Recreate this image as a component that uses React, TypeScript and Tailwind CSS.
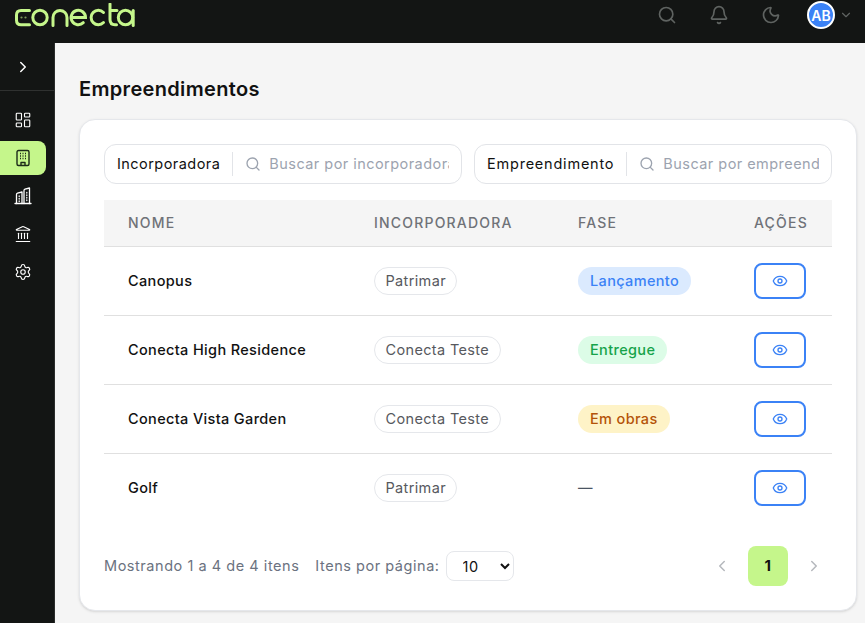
import { Bell, ChevronDown, ChevronLeft, ChevronRight, Eye, LayoutDashboard, Landmark, Moon, Search, Settings } from "lucide-react";

const rows = [
  { nome: "Canopus", inc: "Patrimar", fase: "Lançamento", cls: "bg-[#dbeafe] text-[#3b82f6]" },
  { nome: "Conecta High Residence", inc: "Conecta Teste", fase: "Entregue", cls: "bg-[#dcfce7] text-[#16a34a]" },
  { nome: "Conecta Vista Garden", inc: "Conecta Teste", fase: "Em obras", cls: "bg-[#fef3c7] text-[#b45309]" },
  { nome: "Golf", inc: "Patrimar", fase: "", cls: "" },
];

function Logo() {
  return (
    <svg width="120" height="24" viewBox="0 0 120 24" fill="none" stroke="#c5f68b" strokeWidth="3" strokeLinecap="round">
      <path d="M14.5 7.5H6Q1.5 7.5 1.5 12V17.2Q1.5 21.7 6 21.7H14.5" />
      <circle cx="6.5" cy="14.5" r="1.1" fill="#7d9a5a" stroke="none" />
      <circle cx="10.5" cy="14.5" r="1.1" fill="#7d9a5a" stroke="none" />
      <circle cx="25" cy="14.5" r="7.2" />
      <path d="M38 22.5V14.5a7 7 0 0 1 14 0V22.5" />
      <path d="M56.5 14.5H70.5a7.2 7.2 0 1 0 -2.2 5.2" />
      <path d="M88.5 9.5a7.2 7.2 0 1 0 0 10" />
      <path d="M95 1V16.5q0 5.2 5 5.2h1.5M95 7.5H102" />
      <circle cx="110.5" cy="14.5" r="7.2" />
      <path d="M118.2 7.5V22.5" />
    </svg>
  );
}

function OfficeIcon() {
  return (
    <svg width="18" height="18" viewBox="0 0 18 18" fill="none" stroke="currentColor" strokeWidth="1.4" strokeLinejoin="round">
      <rect x="3" y="1.5" width="12" height="15" rx="1.5" />
      <path d="M7 16.5V13.5H11V16.5" />
      <path d="M6 4.5H7M8.5 4.5H9.5M11 4.5H12M6 7H7M8.5 7H9.5M11 7H12M6 9.5H7M8.5 9.5H9.5M11 9.5H12" />
    </svg>
  );
}

function TowersIcon() {
  return (
    <svg width="18" height="18" viewBox="0 0 18 18" fill="none" stroke="currentColor" strokeWidth="1.3" strokeLinecap="round" strokeLinejoin="round">
      <path d="M1 16.5H17" />
      <path d="M2.5 16.5V7.5Q2.5 6.5 3.5 6.2L8 5V16.5" />
      <path d="M10 16.5V3.5Q10 2.5 11 2.2L15.5 1V16.5" />
      <path d="M5.2 9V9.5M5.2 11.5V12M5.2 14V14.5M12.8 5.5V6M12.8 8V8.5M12.8 10.5V11M12.8 13V13.5" />
    </svg>
  );
}

function Filter({ label, placeholder, labelClass }: { label: string; placeholder: string; labelClass: string }) {
  return (
    <div className="flex-1 min-w-0 h-10 flex items-center bg-white border border-[#e2e4e8] rounded-xl px-3">
      <span className={"text-[14.5px] text-[#111] pr-3 border-r border-[#e2e4e8] leading-6 whitespace-nowrap " + labelClass}>{label}</span>
      <Search size={16} className="ml-3 mr-2 shrink-0 text-[#9ca3af]" />
      <input placeholder={placeholder} className="min-w-0 flex-1 text-[14.5px] tracking-[0.45px] text-[#111] outline-none placeholder:text-[#9ca3af]" />
    </div>
  );
}

export default function App() {
  return (
    <div className="h-screen flex flex-col overflow-hidden bg-[#f5f5f5] font-['Inter',sans-serif]">
      <header className="h-[43px] shrink-0 bg-[#131514] flex items-start pl-[15px] pr-[12px]">
        <div className="pt-[3px]"><Logo /></div>
        <div className="ml-auto h-[30px] flex items-center text-[#5f6361]">
          <Search size={20} />
          <Bell size={20} className="ml-8" />
          <Moon size={20} className="ml-8" />
          <div className="ml-[26px] w-7 h-7 rounded-full bg-[#3b82f6] border-2 border-white flex items-center justify-center text-white text-[14px] font-semibold">AB</div>
          <ChevronDown size={14} className="ml-[4px]" />
        </div>
      </header>

      <div className="flex-1 flex min-h-0">
        <aside className="w-[55px] shrink-0 bg-[#131514] text-white border-r border-[#2a2c2b]">
          <div className="h-[48px] flex items-center justify-center border-b border-[#2f3130] pr-[9px]">
            <ChevronRight size={18} />
          </div>
          <nav className="pt-[12px] flex flex-col gap-[4px] pr-[8px]">
            <div className="h-[34px] flex items-center justify-center"><LayoutDashboard size={18} strokeWidth={1.5} /></div>
            <div className="h-[34px] flex items-center justify-center bg-[#c5f68b] rounded-r-lg text-[#1d2b1a]"><OfficeIcon /></div>
            <div className="h-[34px] flex items-center justify-center"><TowersIcon /></div>
            <div className="h-[34px] flex items-center justify-center"><Landmark size={18} strokeWidth={1.5} /></div>
            <div className="h-[34px] flex items-center justify-center"><Settings size={18} strokeWidth={1.5} /></div>
          </nav>
        </aside>

        <main className="flex-1 min-w-0 pl-6 pr-2 pt-[32px]">
          <h1 className="text-[20px] leading-7 font-semibold tracking-[0.33px] text-[#111] mb-4">Empreendimentos</h1>
          <section className="bg-white border border-[#e5e7eb] rounded-2xl shadow-sm p-6">
            <div className="flex gap-3 mb-4">
              <Filter label="Incorporadora" placeholder="Buscar por incorporadora" labelClass="tracking-[0.45px]" />
              <Filter label="Empreendimento" placeholder="Buscar por empreendimento" labelClass="tracking-[0.78px]" />
            </div>

            <table className="w-full table-fixed border-collapse">
              <colgroup>
                <col className="w-[246px]" />
                <col className="w-[204px]" />
                <col className="w-[176px]" />
                <col className="w-[102px]" />
              </colgroup>
              <thead>
                <tr className="h-[46px] bg-[#f5f5f5] border-b border-[#e0e0e0] text-left text-[14px] text-[#6f7278] tracking-[1.2px]">
                  <th className="pl-6 font-medium">NOME</th>
                  <th className="pl-6 font-medium">INCORPORADORA</th>
                  <th className="pl-6 font-medium">FASE</th>
                  <th className="pl-6 font-medium">AÇÕES</th>
                </tr>
              </thead>
              <tbody className="text-[14.5px] tracking-[0.35px]">
                {rows.map((r, i) => (
                  <tr key={r.nome} className={i < 3 ? "h-[69px] border-b border-[#e0e0e0]" : "h-[69px]"}>
                    <td className="pl-6 font-medium text-[#111] whitespace-nowrap">{r.nome}</td>
                    <td className="pl-6">
                      <span className="inline-flex items-center h-7 px-[10.5px] rounded-full border border-[#e5e7eb] text-[#57595e] whitespace-nowrap">{r.inc}</span>
                    </td>
                    <td className="pl-6">
                      {r.fase ? (
                        <span className={"inline-flex items-center h-7 px-3 rounded-full font-medium whitespace-nowrap " + r.cls}>{r.fase}</span>
                      ) : (
                        <span className="text-[#4b5563]">—</span>
                      )}
                    </td>
                    <td className="pl-6">
                      <button className="w-[52px] h-9 flex items-center justify-center rounded-lg border-2 border-[#3b82f6] text-[#3b82f6]">
                        <Eye size={16} />
                      </button>
                    </td>
                  </tr>
                ))}
              </tbody>
            </table>

            <div className="flex items-center mt-6 h-10 text-[14.5px] tracking-[0.54px]">
              <span className="text-[#6b7280]">Mostrando 1 a 4 de 4 itens</span>
              <span className="ml-4 text-[#6b7280]">Itens por página:</span>
              <select className="ml-[6px] w-[68px] h-[30px] px-3 rounded-lg border border-[#e5e7eb] bg-white text-[#111]">
                <option>10</option>
                <option>20</option>
              </select>
              <div className="ml-auto flex items-center text-[#b5b8bd] pr-[9px]">
                <ChevronLeft size={18} />
                <div className="mx-[17px] w-10 h-10 rounded-lg bg-[#c5f68b] flex items-center justify-center text-[#111] text-[15px] font-bold">1</div>
                <ChevronRight size={18} />
              </div>
            </div>
          </section>
        </main>
      </div>
    </div>
  );
}
